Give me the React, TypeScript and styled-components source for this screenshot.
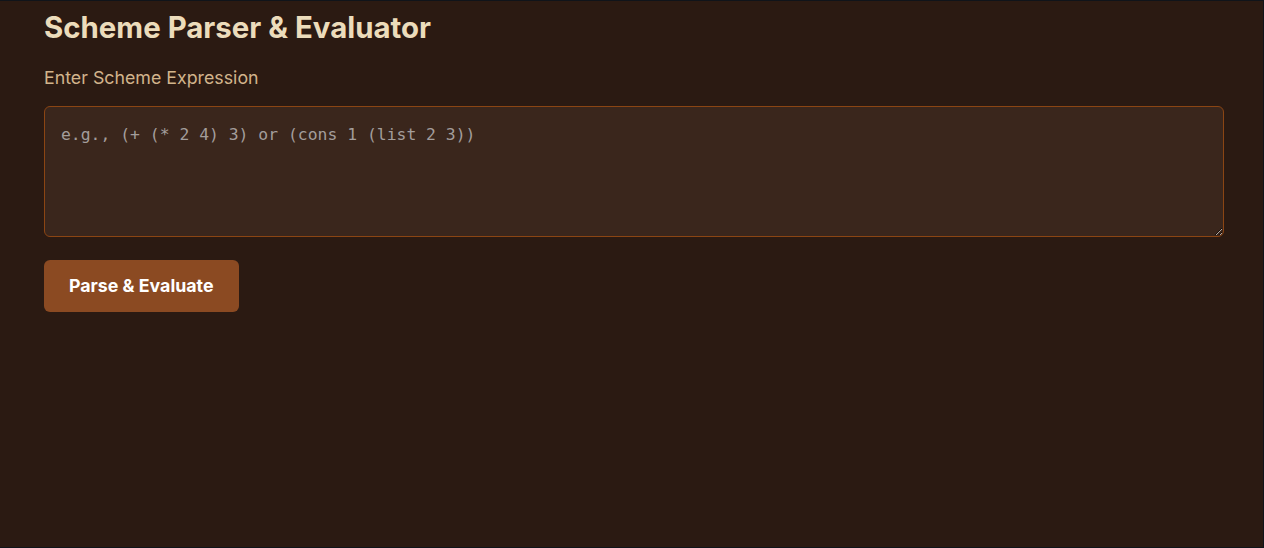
import React, { FC, useState } from "react";
import styled, { createGlobalStyle } from "styled-components";

const GlobalStyle = createGlobalStyle`
  html, body {
    margin: 0;
    padding: 0;
    background: #10141a;
  }
  * {
    box-sizing: border-box;
  }
`;

const Page = styled.div`
  height: 100vh;
  background-color: #2b1a12;
  border-top: 1px solid #10141a;
  border-right: 1px solid #10141a;
  border-bottom: 1px solid #10141a;
  padding: 0 39px 0 44px;
  font-family: Inter, "Liberation Sans", sans-serif;
`;

const Title = styled.h1`
  margin: 0;
  padding-top: 9px;
  font-size: 29.4px;
  font-weight: 700;
  line-height: 36px;
  color: #ecdcbb;
`;

const Label = styled.label`
  display: block;
  margin-top: 18px;
  font-size: 17.8px;
  line-height: 27px;
  color: #d2b48c;
`;

const ExpressionInput = styled.textarea`
  display: block;
  width: 100%;
  height: 131px;
  margin-top: 15px;
  padding: 15px 16px;
  background-color: #3a261c;
  border: 1px solid #8b4513;
  border-radius: 6px;
  color: #ecdcbb;
  font-family: "DejaVu Sans Mono", monospace;
  font-size: 16.4px;
  line-height: 26px;
  outline: none;
  &::placeholder {
    color: #a39d9b;
  }
`;

const SubmitButton = styled.button`
  margin-top: 23px;
  padding: 12px 25px;
  background-color: #8b4a22;
  border: none;
  border-radius: 6px;
  color: #fff;
  font-family: Inter, "Liberation Sans", sans-serif;
  font-size: 17.8px;
  font-weight: 700;
  line-height: 28px;
  cursor: pointer;
`;

const App: FC = () => {
  const [expression, setExpression] = useState<string>("");

  return (
    <>
      <GlobalStyle />
      <Page>
        <Title>Scheme Parser &amp; Evaluator</Title>
        <Label htmlFor="expr">Enter Scheme Expression</Label>
        <ExpressionInput
          id="expr"
          placeholder="e.g., (+ (* 2 4) 3) or (cons 1 (list 2 3))"
          value={expression}
          onChange={(e) => setExpression(e.target.value)}
        />
        <SubmitButton type="button">Parse &amp; Evaluate</SubmitButton>
      </Page>
    </>
  );
};

export default App;
